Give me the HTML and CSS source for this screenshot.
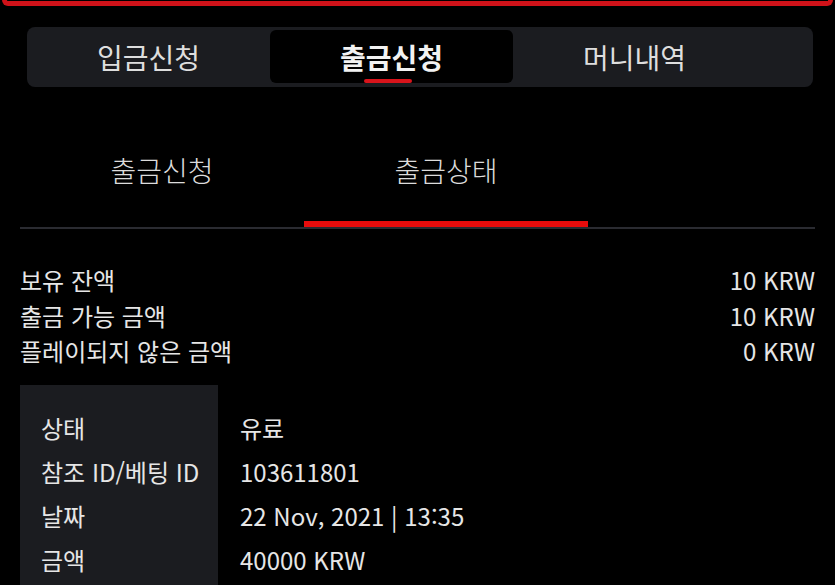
FILE: index.html
```html
<!DOCTYPE html>
<html lang="ko">
<head>
    <meta charset="UTF-8">
    <meta name="viewport" content="width=device-width, initial-scale=1.0">
    <title>출금신청</title>
    <link rel="stylesheet" href="styles.css">
</head>
<body>
    <div class="topline"></div>

    <div class="tabbar">
        <div class="tab">입금신청</div>
        <div class="tab ativo">출금신청</div>
        <div class="tab">머니내역</div>
    </div>

    <div class="pagina">
        <div class="subtabs">
            <div class="subtab">출금신청</div>
            <div class="subtab ativo">출금상태</div>
        </div>

        <div class="saldos">
            <div class="linha"><span>보유 잔액</span><span>10 KRW</span></div>
            <div class="linha"><span>출금 가능 금액</span><span>10 KRW</span></div>
            <div class="linha"><span>플레이되지 않은 금액</span><span>0 KRW</span></div>
        </div>

        <div class="detalhes">
            <div class="rotulos">
                <div>상태</div>
                <div>참조 ID/베팅 ID</div>
                <div>날짜</div>
                <div>금액</div>
            </div>
            <div class="valores">
                <div>유료</div>
                <div>103611801</div>
                <div>22 Nov, 2021 | 13:35</div>
                <div>40000 KRW</div>
            </div>
        </div>
    </div>
</body>
</html>
```

FILE: styles.css
```css
body {
    background-color: black;
    color: #e6e6e6;
    font-family: "Noto Sans CJK KR", "Noto Sans", sans-serif;
    margin: 0;
    overflow: hidden;
}
.topline {
    height: 1px;
    margin: 0 2px;
    border: 5px solid #cf1219;
    border-top: none;
    border-radius: 0 0 9px 9px;
}
.tabbar {
    display: flex;
    height: 53px;
    margin: 21px 22px 0 27px;
    padding: 3px 0 4px;
    background-color: #1b1c20;
    border-radius: 8px;
}
.tab {
    width: 243px;
    display: flex;
    justify-content: center;
    align-items: center;
    font-size: 28px;
    color: #dedede;
    position: relative;
}
.tab.ativo {
    background-color: black;
    border-radius: 6px;
    font-weight: bold;
    color: #f2f2f2;
}
.tab.ativo::after {
    content: "";
    position: absolute;
    bottom: 0;
    left: 94px;
    width: 48px;
    height: 4px;
    border-radius: 2px;
    background-color: #d8141b;
}
.pagina {
    padding: 0 20px;
}
.subtabs {
    display: flex;
    margin-top: 40px;
    border-bottom: 2px solid #2a2b31;
}
.subtab {
    width: 284px;
    height: 75px;
    padding-top: 25px;
    line-height: 36px;
    text-align: center;
    font-size: 28px;
    font-weight: 300;
    color: #dcdcdc;
    position: relative;
}
.subtab.ativo::after {
    content: "";
    position: absolute;
    left: 0;
    right: 0;
    bottom: 0;
    height: 6px;
    background-color: #e80c0c;
}
.saldos {
    margin-top: 33px;
    font-size: 24px;
}
.linha {
    display: flex;
    justify-content: space-between;
    line-height: 35.5px;
}
.detalhes {
    display: flex;
    margin-top: 16px;
    font-size: 24px;
    line-height: 44px;
}
.rotulos {
    width: 177px;
    padding: 21px 0 30px 21px;
    background-color: #1b1c20;
}
.valores {
    padding: 21px 0 30px 22px;
}
```
